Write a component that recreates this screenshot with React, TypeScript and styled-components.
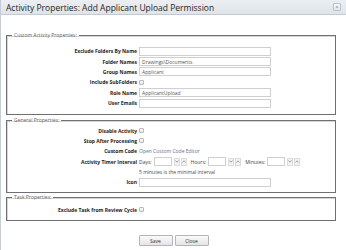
import React from 'react'
import styled, { createGlobalStyle } from 'styled-components'

const GlobalStyle = createGlobalStyle`
  html, body {
    margin: 0;
    padding: 0;
    background: #ffffff;
    font-family: 'Open Sans', 'DejaVu Sans', sans-serif;
  }
`

const Dialog = styled.div`
  box-sizing: border-box;
  width: 346px;
  height: 250px;
  background: #ffffff;
  border-left: 1px solid #c4ccd4;
  display: flex;
  flex-direction: column;
  overflow: hidden;
`

const TitleBar = styled.div`
  box-sizing: border-box;
  height: 15px;
  flex: 0 0 15px;
  display: flex;
  align-items: center;
  justify-content: space-between;
  padding: 0 5px 0 5px;
  background: linear-gradient(#eceff2, #dfe4e9);
  border-bottom: 1px solid #c3cad1;
`

const Title = styled.span`
  font-size: 8.5px;
  color: #1e1e1e;
  white-space: nowrap;
`

const CloseButton = styled.div`
  box-sizing: border-box;
  width: 8px;
  height: 8px;
  border: 1px solid #b8c0c8;
  border-radius: 1px;
  background: linear-gradient(#f7f8f9, #e3e7eb);
  display: flex;
  align-items: center;
  justify-content: center;
  font-size: 5px;
  line-height: 1;
  color: #6b6b6b;
`

const Body = styled.div`
  display: flex;
  flex-direction: column;
  gap: 2px;
  padding: 17px 10px 0 5px;
`

const Group = styled.fieldset<{ $pad?: string; $shift?: number }>`
  margin: ${({ $shift }) => $shift ?? 0}px 0 0 0;
  padding: ${({ $pad }) => $pad ?? '4px 0 5px 0'};
  border: 1px solid #707070;
  box-shadow: inset 1px 1px 0 #d6d6d6;
  min-width: 0;
`

const Legend = styled.legend`
  font-size: 5px;
  color: #5e5e5e;
  padding: 0 2px;
  margin-left: 5px;
  line-height: 7px;
`

const Rows = styled.div`
  display: grid;
  grid-template-columns: 130px 1fr;
  column-gap: 2px;
  grid-auto-rows: 10.4px;
  align-items: center;
`

const Label = styled.label`
  font-size: 5px;
  font-weight: 700;
  color: #222222;
  text-align: right;
  white-space: nowrap;
`

const Field = styled.div`
  display: flex;
  align-items: center;
  gap: 2px;
  font-size: 5px;
  color: #444444;
  white-space: nowrap;
`

const TextBox = styled.div<{ $w?: number }>`
  box-sizing: border-box;
  width: ${({ $w }) => $w ?? 132}px;
  height: 9px;
  border: 1px solid #cfcfcf;
  background: #ffffff;
  font-size: 5px;
  color: #555555;
  padding: 0 2px;
  display: flex;
  align-items: center;
`

const Check = styled.span`
  box-sizing: border-box;
  width: 5px;
  height: 5px;
  border: 1px solid #b9b9b9;
  border-radius: 1px;
  background: linear-gradient(#fafafa, #e8e8e8);
`

const Link = styled.span`
  color: #5b6f8e;
`

const Hint = styled.span`
  color: #4a4a4a;
`

const Spin = styled.div`
  display: flex;
  gap: 1px;
  margin-right: 2px;
`

const SpinButton = styled.span`
  box-sizing: border-box;
  width: 6px;
  height: 8px;
  border: 1px solid #dcdcdc;
  background: #f3f3f3;
  display: flex;
  align-items: center;
  justify-content: center;
`

const Footer = styled.div`
  display: flex;
  justify-content: center;
  gap: 2px;
  margin-top: 14px;
`

const Button = styled.div`
  box-sizing: border-box;
  width: 34px;
  height: 11px;
  border: 1px solid #b5b5b5;
  border-radius: 1px;
  background: linear-gradient(#fbfbfb, #e4e4e4);
  font-size: 5px;
  color: #333333;
  display: flex;
  align-items: center;
  justify-content: center;
`

const Chevron = ({ up }: { up?: boolean }) => (
  <svg width="4" height="3" viewBox="0 0 4 3">
    <polyline
      points={up ? '0.5,2.5 2,0.8 3.5,2.5' : '0.5,0.5 2,2.2 3.5,0.5'}
      fill="none"
      stroke="#8a8a8a"
      strokeWidth="0.8"
    />
  </svg>
)

const Spinner = ({ label }: { label: string }) => (
  <>
    <span>{label}</span>
    <TextBox $w={18} />
    <Spin>
      <SpinButton>
        <Chevron />
      </SpinButton>
      <SpinButton>
        <Chevron up />
      </SpinButton>
    </Spin>
  </>
)

const App = () => {
  return (
    <Dialog>
      <GlobalStyle />
      <TitleBar>
        <Title>Activity Properties: Add Applicant Upload Permission</Title>
        <CloseButton>×</CloseButton>
      </TitleBar>
      <Body>
        <Group $pad="7px 0 6px 0">
          <Legend>Custom Activity Properties:</Legend>
          <Rows>
            <Label>Exclude Folders By Name</Label>
            <Field>
              <TextBox />
            </Field>
            <Label>Folder Names</Label>
            <Field>
              <TextBox>Drawings\Documents</TextBox>
            </Field>
            <Label>Group Names</Label>
            <Field>
              <TextBox>Applicant</TextBox>
            </Field>
            <Label>Include SubFolders</Label>
            <Field>
              <Check />
            </Field>
            <Label>Role Name</Label>
            <Field>
              <TextBox>ApplicantUpload</TextBox>
            </Field>
            <Label>User Emails</Label>
            <Field>
              <TextBox />
            </Field>
          </Rows>
        </Group>
        <Group $pad="1px 0 4px 0">
          <Legend>General Properties:</Legend>
          <Rows>
            <Label>Disable Activity</Label>
            <Field>
              <Check />
            </Field>
            <Label>Stop After Processing</Label>
            <Field>
              <Check />
            </Field>
            <Label>Custom Code</Label>
            <Field>
              <Link>Open Custom Code Editor</Link>
            </Field>
            <Label>Activity Timer Interval</Label>
            <Field>
              <Spinner label="Days:" />
              <Spinner label="Hours:" />
              <Spinner label="Minutes:" />
            </Field>
            <span />
            <Field>
              <Hint>5 minutes is the minimal interval</Hint>
            </Field>
            <Label>Icon</Label>
            <Field>
              <TextBox />
            </Field>
          </Rows>
        </Group>
        <Group $pad="4px 0 5px 0" $shift={-1}>
          <Legend>Task Properties:</Legend>
          <Rows>
            <Label>Exclude Task from Review Cycle</Label>
            <Field>
              <Check />
            </Field>
          </Rows>
        </Group>
      </Body>
      <Footer>
        <Button>Save</Button>
        <Button>Close</Button>
      </Footer>
    </Dialog>
  )
}

export default App
